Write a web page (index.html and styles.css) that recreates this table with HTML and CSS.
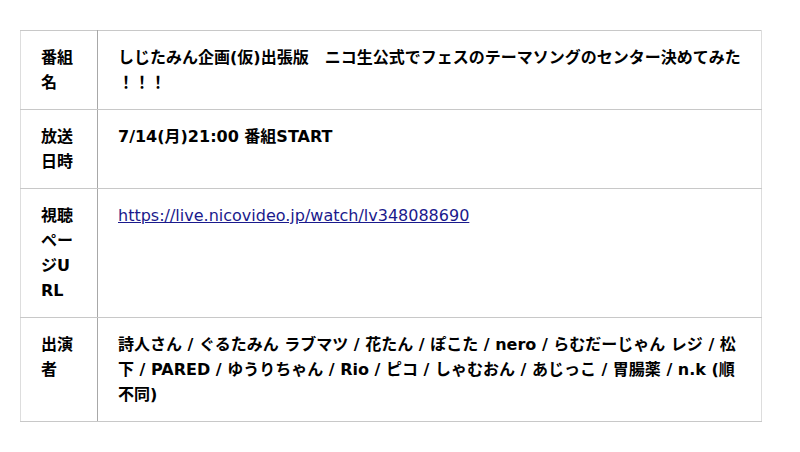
FILE: index.html
```html
<!DOCTYPE html>
<html lang="ja">
<head>
<meta charset="utf-8">
<link rel="stylesheet" href="styles.css">
</head>
<body>
<div class="page">
<table class="info">
<tr>
<th class="label">番組名</th>
<td class="value">しじたみん企画(仮)出張版　ニコ生公式でフェスのテーマソングのセンター決めてみた！！！</td>
</tr>
<tr>
<th class="label">放送日時</th>
<td class="value">7/14(月)21:00 番組START</td>
</tr>
<tr>
<th class="label">視聴ページURL</th>
<td class="value"><a class="link" href="#">https://live.nicovideo.jp/watch/lv348088690</a></td>
</tr>
<tr>
<th class="label">出演者</th>
<td class="value">詩人さん / ぐるたみん ラブマツ / 花たん / ぽこた / nero / らむだーじゃん レジ / 松下 / PARED / ゆうりちゃん / Rio / ピコ / しゃむおん / あじっこ / 胃腸薬 / n.k (順不同)</td>
</tr>
</table>
</div>
</body>
</html>
```
FILE: styles.css
```css
html, body {
  margin: 0;
  padding: 0;
  background: #fff;
}
.page {
  padding: 30px 0 0 20px;
}
.info {
  width: 742px;
  border-collapse: collapse;
  border: 1px solid #ddd;
  font-family: "DejaVu Sans", "Noto Sans CJK JP", sans-serif;
  font-size: 16px;
  line-height: 25px;
  font-weight: bold;
  color: #000;
}
.label, .value {
  padding: 14px 20px;
  text-align: left;
  vertical-align: top;
  border-top: 1px solid #c8c8c8;
  border-bottom: 1px solid #c8c8c8;
  word-break: break-all;
  line-break: anywhere;
}
.label {
  width: 36px;
  border-right: 1px solid #a8a8a8;
  font-weight: bold;
}
.value {
  padding-right: 14px;
  border-right: 1px solid #ddd;
}
.link {
  color: #1a1a8c;
  font-weight: normal;
  text-decoration: underline;
}
```
